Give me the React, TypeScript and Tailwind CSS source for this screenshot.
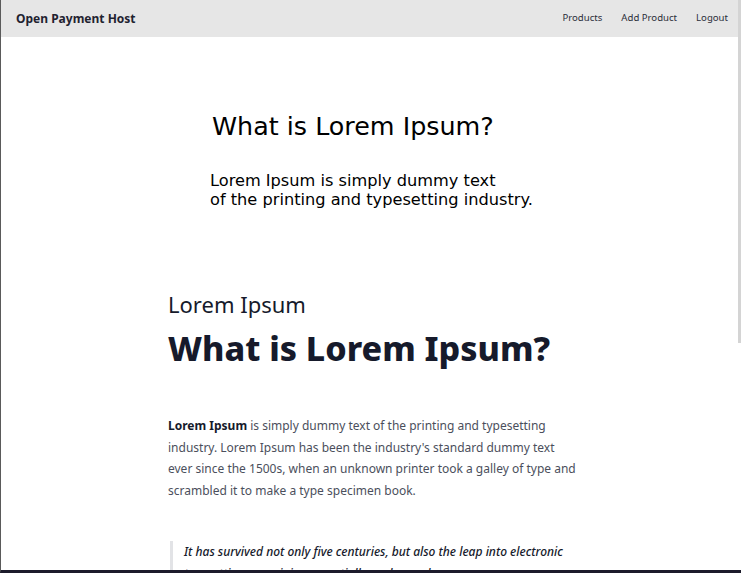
import React from "react";

const navLinks = ["Products", "Add Product", "Logout"];

const App = () => {
  return (
    <div className="relative h-[573px] w-[741px] overflow-hidden border-l border-b-[3px] border-l-[#5a5a5a] border-b-[#1c1b2b] bg-white font-['Noto_Sans',sans-serif]">
      {/* nav */}
      <nav className="flex h-[37px] items-center justify-between bg-[#e6e6e6] pl-[15px] pr-[13px]">
        <span className="text-[12px] font-bold text-[#1f2230]">Open Payment Host</span>
        <div className="flex gap-[19px] text-[9.6px] text-[#2b2e3a]">
          {navLinks.map((l) => (
            <a key={l} href="#">
              {l}
            </a>
          ))}
        </div>
      </nav>

      {/* hero */}
      <section className="pl-[209px] pt-[73px] font-['DejaVu_Sans',sans-serif] text-black">
        <h2 className="ml-[2px] text-[25.4px] leading-[32px]">What is Lorem Ipsum?</h2>
        <p className="mt-[29px] text-[16.2px] leading-[19px]">
          Lorem Ipsum is simply dummy text
          <br />
          of the printing and typesetting industry.
        </p>
      </section>

      {/* article */}
      <article className="ml-[167px] mt-[80px] w-[410px]">
        <p className="text-[22px] leading-[30px] text-[#161a2b]">Lorem Ipsum</p>
        <h1 className="mt-[7px] text-[34px] font-extrabold leading-[44px] text-[#161a2b]">What is Lorem Ipsum?</h1>
        <p className="mt-[45px] text-[12px] leading-[21.5px] text-[#4b4f5c]">
          <strong className="font-bold text-[#161a2b]">Lorem Ipsum</strong> is simply dummy text of the printing
          and typesetting industry. Lorem Ipsum has been the industry's standard dummy text ever since the 1500s,
          when an unknown printer took a galley of type and scrambled it to make a type specimen book.
        </p>
        <blockquote className="mt-[40px] ml-[2px] border-l-[3px] border-[#e2e3e6] pl-[11px] text-[12px] font-medium italic leading-[21.5px] text-[#161a2b]">
          It has survived not only five centuries, but also the leap into electronic typesetting, remaining
          essentially unchanged.
        </blockquote>
      </article>

      {/* scrollbar thumb */}
      <div className="absolute right-0 top-0 h-[343px] w-[3px] bg-[#d4d4d4]" />
    </div>
  );
};

export default App;
